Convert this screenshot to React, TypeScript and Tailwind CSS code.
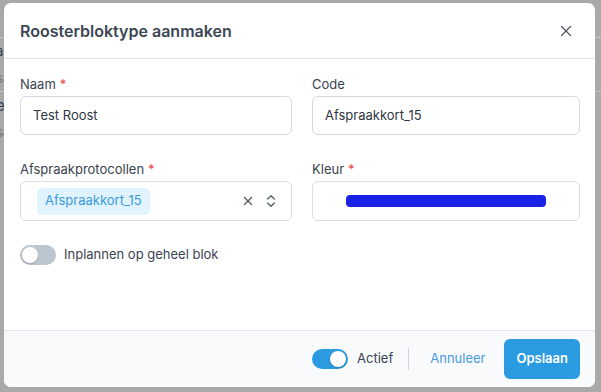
import { X, ChevronsUpDown } from "lucide-react";

type FieldProps = {
  label: string;
  required?: boolean;
  children: React.ReactNode;
};

const Field = ({ label, required, children }: FieldProps) => (
  <div className="flex flex-col">
    <label className="h-[20px] mb-[2px] text-[13px] leading-[20px] text-[#3a4350]">
      {label}
      {required && <span className="ml-[4px] text-[#e5484d]">*</span>}
    </label>
    {children}
  </div>
);

const Toggle = ({ on }: { on: boolean }) => (
  <div
    className={`w-[36px] h-[20px] rounded-full p-[2px] flex items-center ${
      on ? "bg-[#2b9ae0] justify-end" : "bg-[#bcc6cf] justify-start"
    }`}
  >
    <div className="w-[16px] h-[16px] rounded-full bg-white shadow-[0_1px_2px_rgba(0,0,0,0.2)]" />
  </div>
);

export default function App() {
  return (
    <div
      className="relative w-[601px] h-[392px] overflow-hidden bg-[#a9a9a9]"
      style={{ fontFamily: "Inter, 'Noto Sans', sans-serif" }}
    >
      {/* page behind the dialog */}
      <div className="flex flex-col pt-[37px] text-[13px] text-[#2c3e50]">
        <div className="h-px bg-[#c4c4c4]" />
        <div className="h-[27px] leading-[27px] -ml-[4px]">as</div>
        <div className="h-[26px] leading-[26px] -ml-[4px] text-[#777]">sa</div>
        <div className="h-px bg-[#c4c4c4]" />
        <div className="h-[27px] leading-[27px] -ml-[4px] text-[15px]">e</div>
        <div className="h-[26px] leading-[26px] -ml-[4px] text-[#777]">sa</div>
      </div>

      {/* dialog */}
      <div className="absolute left-[4px] top-[3px] w-[591px] h-[384px] bg-white rounded-[7px] flex flex-col overflow-hidden">
        <div className="h-[56px] shrink-0 flex items-center justify-between pl-[16px] pr-[20px] border-b border-[#dfe5ec]">
          <h2 className="text-[16px] font-semibold text-[#3c4654]">
            Roosterbloktype aanmaken
          </h2>
          <X size={18} strokeWidth={1.6} className="text-[#4a5361]" />
        </div>

        <div className="flex-1 flex flex-col px-[16px] pt-[15px]">
          <div className="grid grid-cols-[272px_268px] gap-x-[20px] gap-y-[24px]">
            <Field label="Naam" required>
              <div className="h-[39px] rounded-[6px] border border-[#cfd8e1] flex items-center px-[12px] text-[13px] text-[#2f3742]">
                Test Roost
              </div>
            </Field>
            <Field label="Code">
              <div className="h-[39px] rounded-[6px] border border-[#cfd8e1] flex items-center px-[12px] text-[13px] text-[#2f3742]">
                Afspraakkort_15
              </div>
            </Field>
            <Field label="Afspraakprotocollen" required>
              <div className="h-[40px] rounded-[6px] border border-[#d6dee6] flex items-center pl-[16px] pr-[12px]">
                <span className="h-[27px] px-[8px] flex items-center rounded-[5px] bg-[#e1f3fd] text-[13px] text-[#3a9be0]">
                  Afspraakkort_15
                </span>
                <div className="ml-auto flex items-center gap-[8px] text-[#5a6270]">
                  <X size={14} strokeWidth={2.4} />
                  <ChevronsUpDown size={16} strokeWidth={2.2} />
                </div>
              </div>
            </Field>
            <Field label="Kleur" required>
              <div className="h-[40px] rounded-[6px] border border-[#d6dee6] flex items-center justify-center">
                <div className="w-[200px] h-[12px] rounded-[4px] bg-[#1a22e6]" />
              </div>
            </Field>
          </div>

          <div className="mt-[24px] flex items-center gap-[8px]">
            <Toggle on={false} />
            <span className="text-[13px] text-[#3a4350]">Inplannen op geheel blok</span>
          </div>
        </div>

        <div className="h-[57px] shrink-0 border-t border-[#dfe5ec] bg-[#f8fafc] flex items-center justify-end pr-[15px]">
          <Toggle on={true} />
          <span className="ml-[9px] text-[13px] text-[#3a4350]">Actief</span>
          <div className="ml-[15px] w-px h-[22px] bg-[#cfd5dc]" />
          <span className="ml-[21px] text-[13px] text-[#4a9be0]">Annuleer</span>
          <button className="ml-[19px] h-[40px] px-[12px] rounded-[6px] bg-[#2a9be0] text-white text-[13px] font-semibold">
            Opslaan
          </button>
        </div>
      </div>
    </div>
  );
}
